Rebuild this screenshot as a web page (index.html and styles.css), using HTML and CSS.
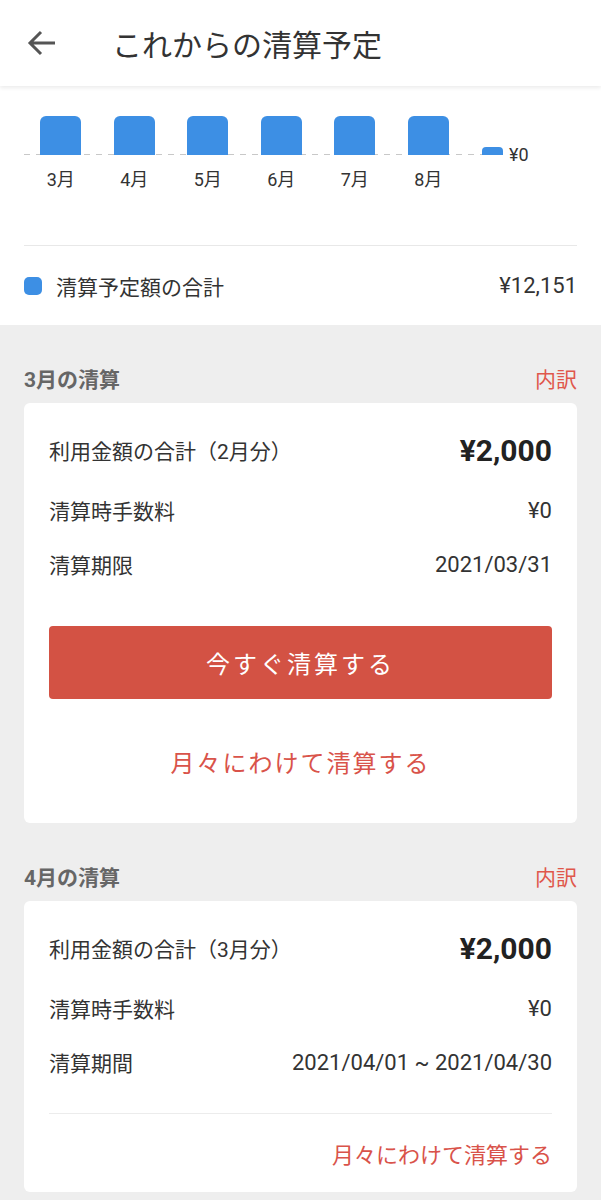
FILE: index.html
```html
<!DOCTYPE html>
<html lang="ja">
<head>
    <meta charset="UTF-8">
    <meta name="viewport" content="width=device-width, initial-scale=1.0">
    <title>これからの清算予定</title>
    <link rel="stylesheet" href="styles.css">
</head>
<body>
    <header class="app-bar">
        <button class="back-btn" aria-label="戻る">
            <svg width="30" height="26" viewBox="0 0 30 26">
                <path d="M28 13H3M14 2L3 13l11 11" fill="none" stroke="#555" stroke-width="3"/>
            </svg>
        </button>
        <h1>これからの清算予定</h1>
    </header>

    <section class="summary">
        <div class="chart">
            <div class="chart-row">
                <div class="bars">
                    <div class="slot"><div class="bar"></div></div>
                    <div class="slot"><div class="bar"></div></div>
                    <div class="slot"><div class="bar"></div></div>
                    <div class="slot"><div class="bar"></div></div>
                    <div class="slot"><div class="bar"></div></div>
                    <div class="slot"><div class="bar"></div></div>
                    <div class="slot slot-last"><div class="bar bar-zero"></div></div>
                </div>
                <span class="zero-label">¥0</span>
            </div>
            <div class="months">
                <span>3月</span>
                <span>4月</span>
                <span>5月</span>
                <span>6月</span>
                <span>7月</span>
                <span>8月</span>
            </div>
        </div>

        <div class="legend">
            <span class="dot"></span>
            <span class="legend-label">清算予定額の合計</span>
            <span class="legend-value">¥12,151</span>
        </div>
    </section>

    <main class="list">
        <section class="month">
            <div class="month-head">
                <h2>3月の清算</h2>
                <a class="detail" href="#">内訳</a>
            </div>
            <div class="card">
                <div class="row row-total">
                    <span>利用金額の合計（2月分）</span>
                    <span class="amount">¥2,000</span>
                </div>
                <div class="row">
                    <span>清算時手数料</span>
                    <span class="num">¥0</span>
                </div>
                <div class="row">
                    <span>清算期限</span>
                    <span class="num">2021/03/31</span>
                </div>
                <button class="pay-btn">今すぐ清算する</button>
                <a class="split-link" href="#">月々にわけて清算する</a>
            </div>
        </section>

        <section class="month">
            <div class="month-head">
                <h2>4月の清算</h2>
                <a class="detail" href="#">内訳</a>
            </div>
            <div class="card">
                <div class="row row-total">
                    <span>利用金額の合計（3月分）</span>
                    <span class="amount">¥2,000</span>
                </div>
                <div class="row">
                    <span>清算時手数料</span>
                    <span class="num">¥0</span>
                </div>
                <div class="row">
                    <span>清算期間</span>
                    <span class="num">2021/04/01 ~ 2021/04/30</span>
                </div>
                <div class="card-footer">
                    <a class="split-link-small" href="#">月々にわけて清算する</a>
                </div>
            </div>
        </section>
    </main>
</body>
</html>
```

FILE: styles.css
```css
body {
    font-family: Roboto, "Noto Sans CJK JP", sans-serif;
    background-color: #eeeeee;
    color: #333;
    margin: 0;
}

/* ヘッダー */
.app-bar {
    height: 86px;
    background-color: white;
    display: flex;
    align-items: center;
    box-shadow: 0 2px 4px rgba(0, 0, 0, 0.08);
    position: relative;
    z-index: 1;
}

.back-btn {
    background: none;
    border: none;
    padding: 0;
    margin-left: 27px;
    width: 30px;
    height: 26px;
    display: flex;
}

.app-bar h1 {
    margin: 0 0 0 55px;
    font-size: 30px;
    font-weight: normal;
    color: #333;
}

/* グラフ */
.summary {
    background-color: white;
    padding: 30px 24px 0;
}

.chart-row {
    display: flex;
    align-items: flex-end;
}

.bars {
    display: flex;
    align-items: flex-end;
    height: 39px;
    background: repeating-linear-gradient(90deg, #c8c8c8 0 6px, transparent 6px 12px) left bottom / 100% 1px no-repeat;
}

.slot {
    width: 73.5px;
    display: flex;
    justify-content: center;
}

.slot-last {
    width: 38px;
    justify-content: flex-end;
}

.bar {
    width: 41px;
    height: 39px;
    background-color: #3d8fe4;
    border-radius: 6px 6px 0 0;
}

.bar-zero {
    width: 21px;
    height: 8px;
    border-radius: 4px 4px 0 0;
}

.zero-label {
    font-size: 18px;
    line-height: 20px;
    margin: 0 0 -10px 6px;
}

.months {
    display: flex;
    margin-top: 13px;
}

.months span {
    width: 73.5px;
    text-align: center;
    font-size: 18px;
    line-height: 24px;
}

.legend {
    margin-top: 53px;
    border-top: 1px solid #e8e8e8;
    height: 79px;
    display: flex;
    align-items: center;
}

.dot {
    width: 18px;
    height: 18px;
    border-radius: 5px;
    background-color: #3d8fe4;
}

.legend-label {
    margin-left: 14px;
    font-size: 21px;
    flex: 1;
}

.legend-value {
    font-size: 22px;
}

/* 月ごとの清算 */
.list {
    padding: 0 24px 8px;
}

.month {
    padding-top: 28px;
}

.month-head {
    height: 50px;
    display: flex;
    align-items: center;
    justify-content: space-between;
}

.month-head h2 {
    margin: 0;
    font-size: 21px;
    font-weight: bold;
    color: #666;
}

.detail {
    font-size: 21px;
    color: #e0574b;
    text-decoration: none;
}

.card {
    background-color: white;
    border-radius: 6px;
    padding: 14px 25px 0;
}

.row {
    height: 54px;
    display: flex;
    align-items: center;
    justify-content: space-between;
    font-size: 21px;
}

.row .num {
    font-size: 22px;
}

.row-total {
    height: 66px;
}

.amount {
    font-size: 30px;
    font-weight: bold;
    color: #222;
}

.pay-btn {
    display: block;
    width: 100%;
    height: 73px;
    margin-top: 35px;
    background-color: #d35244;
    color: white;
    border: none;
    border-radius: 4px;
    font-family: inherit;
    font-size: 24px;
    letter-spacing: 3px;
}

.split-link {
    height: 124px;
    display: flex;
    align-items: center;
    justify-content: center;
    font-size: 24px;
    letter-spacing: 2px;
    color: #d9534a;
    text-decoration: none;
}

.card-footer {
    margin-top: 24px;
    border-top: 1px solid #ececec;
    height: 78px;
    display: flex;
    align-items: center;
    justify-content: flex-end;
}

.split-link-small {
    font-size: 22px;
    color: #d9534a;
    text-decoration: none;
}
```
